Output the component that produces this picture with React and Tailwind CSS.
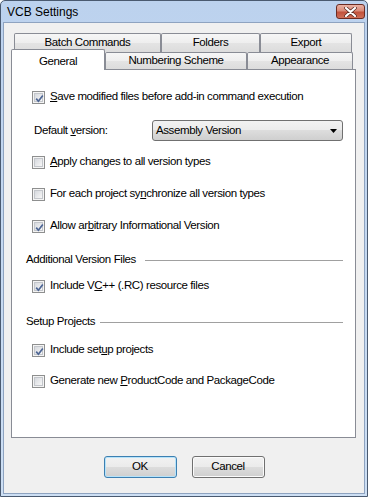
import React from 'react';

const tabBg =
  'bg-[linear-gradient(to_bottom,#f6f6f6_0%,#eeeeee_50%,#e4e4e4_50%,#dcdcdc_100%)]';
const btnBg =
  'bg-[linear-gradient(to_bottom,#f2f2f2_0%,#ebebeb_50%,#dddddd_50%,#cfcfcf_100%)]';

/* =========================
   CHECKBOX (VISTA STYLE)
========================= */
const CheckBox = ({ checked }) => (
  <span className="relative flex h-[13px] w-[13px] shrink-0 items-center justify-center border border-[#8e8f8f] bg-[#f4f4f4]">
    <span className="h-[9px] w-[9px] border border-[#c3c6cb] bg-gradient-to-br from-[#d6d9de] to-[#f7f7f7]" />
    {checked && (
      <svg className="absolute left-[1px] top-[1px]" width="11" height="11" viewBox="0 0 11 11">
        <path d="M2.2 5.6 L4.4 8.2 L8.8 2.4" fill="none" stroke="#4e6694" strokeWidth="1.7" />
      </svg>
    )}
  </span>
);

const CheckRow = ({ checked, children, className = '' }) => (
  <div className={`flex h-[16px] items-center ${className}`}>
    <CheckBox checked={checked} />
    <span className="ml-[5px] leading-none">{children}</span>
  </div>
);

const GroupHeader = ({ label, labelWidth, className = '' }) => (
  <div className={`-ml-[6px] flex h-[16px] w-[317px] items-center ${className}`}>
    <span className={`shrink-0 leading-none ${labelWidth}`}>{label}</span>
    <span className="h-px flex-1 bg-[#a0a0a0]" />
  </div>
);

const Tab = ({ width, children }) => (
  <div
    className={`flex h-full items-center justify-center rounded-t-[2px] border border-b-0 border-[#898c95] ${tabBg} ${width}`}
  >
    {children}
  </div>
);

export default function App() {
  return (
    <div className="h-[497px] w-[368px] overflow-hidden rounded-t-[5px] border border-[#4a5a70] bg-gradient-to-b from-[#bcd2ee] to-[#cddff4] font-['Liberation_Sans',Arial,sans-serif] text-[11.5px] tracking-[-0.4px] text-black">
      {/* TITLE BAR */}
      <div className="flex h-[21px] items-center justify-between pl-[6px] pr-[2px]">
        <span className="text-[12px] tracking-normal">VCB Settings</span>
        <div className="flex h-[15px] w-[29px] items-center justify-center rounded-[3px] border border-[#6b2b22] bg-[linear-gradient(to_bottom,#eab2a4_0%,#d98a78_45%,#c2523c_55%,#cf6f58_100%)]">
          <svg width="13" height="10" viewBox="0 0 13 10">
            <path d="M2 1 L11 9 M11 1 L2 9" stroke="#5b2a22" strokeWidth="3.6" strokeLinecap="round" />
            <path d="M2 1 L11 9 M11 1 L2 9" stroke="#ffffff" strokeWidth="2.2" strokeLinecap="round" />
          </svg>
        </div>
      </div>

      {/* CLIENT AREA */}
      <div className="ml-[2px] h-[472px] w-[362px] border border-[#8ea3c0] bg-[#f0f0f0] pt-[10px]">
        {/* TABS ROW 1 */}
        <div className="ml-[10px] flex h-[19px]">
          <Tab width="w-[147px]">Batch Commands</Tab>
          <Tab width="w-[99px]">Folders</Tab>
          <Tab width="w-[92px]">Export</Tab>
        </div>

        {/* TABS ROW 2 */}
        <div className="ml-[7px] flex h-[17px] items-start">
          <div className="relative z-10 -mt-[3px] flex h-[21px] w-[94px] justify-center rounded-t-[2px] border border-b-0 border-[#898c95] bg-white pt-[3px]">
            General
          </div>
          <Tab width="w-[142px]">Numbering Scheme</Tab>
          <Tab width="w-[106px]">Appearance</Tab>
        </div>

        {/* PANEL */}
        <div className="ml-[7px] h-[369px] w-[345px] border border-[#898c95] bg-white pl-[20px] pt-[19px]">
          <CheckRow checked>
            <u>S</u>ave modified files before add-in command execution
          </CheckRow>

          <div className="mt-[15px] flex h-[21px] items-center">
            <span className="ml-[2px] w-[118px] leading-none">
              Default <u>v</u>ersion:
            </span>
            <div className={`flex h-[21px] w-[191px] items-center justify-between rounded-[3px] border border-[#707070] pl-[3px] pr-[5px] ${btnBg}`}>
              <span className="leading-none">Assembly Version</span>
              <svg width="7" height="4" viewBox="0 0 7 4">
                <path d="M0 0 H7 L3.5 4 Z" fill="#000" />
              </svg>
            </div>
          </div>

          <CheckRow className="mt-[13px]">
            <u>A</u>pply changes to all version types
          </CheckRow>
          <CheckRow className="mt-[16px]">
            For each project sy<u>n</u>chronize all version types
          </CheckRow>
          <CheckRow checked className="mt-[16px]">
            Allow ar<u>b</u>itrary Informational Version
          </CheckRow>

          <GroupHeader label="Additional Version Files" labelWidth="w-[119px]" className="mt-[18px]" />

          <CheckRow checked className="mt-[10px]">
            Include V<u>C</u>++ (.RC) resource files
          </CheckRow>

          <GroupHeader label="Setup Projects" labelWidth="w-[74px]" className="mt-[20px]" />

          <CheckRow checked className="mt-[12px]">
            Include set<u>u</u>p projects
          </CheckRow>
          <CheckRow className="mt-[15px]">
            Generate new <u>P</u>roductCode and PackageCode
          </CheckRow>
        </div>

        {/* ACTIONS */}
        <div className="mt-[18px] flex justify-center gap-[15px]">
          <button
            type="button"
            className={`flex h-[22px] w-[73px] items-center justify-center rounded-[3px] border border-[#3c7fb1] shadow-[inset_0_0_0_1px_#b6e3fa] ${btnBg}`}
          >
            OK
          </button>
          <button
            type="button"
            className={`flex h-[22px] w-[73px] items-center justify-center rounded-[3px] border border-[#707070] shadow-[inset_0_0_0_1px_#fbfbfb] ${btnBg}`}
          >
            Cancel
          </button>
        </div>
      </div>
    </div>
  );
}
